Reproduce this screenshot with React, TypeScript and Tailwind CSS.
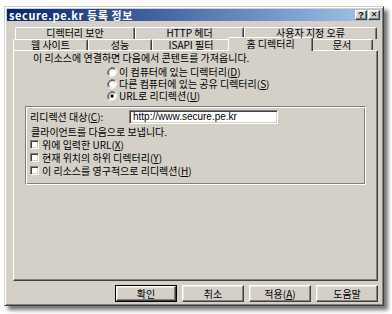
import React from "react";

const F = "font-['Noto_Sans_CJK_KR','Noto_Sans',sans-serif]";

const raised =
  "border border-t-white border-l-white border-r-[#404040] border-b-[#404040] shadow-[inset_-1px_-1px_#808080,inset_1px_1px_#e8e6e1]";

function L({ pre, k, post = ")" }: { pre: string; k: string; post?: string }) {
  return (
    <span className="flex items-center leading-[12px] whitespace-pre">
      <span>{pre}</span>
      <span className="underline underline-offset-[1px]">{k}</span>
      <span>{post}</span>
    </span>
  );
}

function Tab({ w, h, children, sel, up }: { w: number; h: number; children: React.ReactNode; sel?: boolean; up?: boolean }) {
  return (
    <div
      style={{ width: w, height: sel ? h + 3 : h }}
      className={`${sel ? "-mx-[2px] -mt-[2px] -mb-[1px] relative z-10 pb-[1px]" : ""} ${up ? "pb-[2px]" : ""} shrink-0 bg-[#d4d0c8] border-t border-l border-r border-t-white border-l-white border-r-[#404040] rounded-t-[2px] shadow-[inset_-1px_0_#808080] flex items-center justify-center text-[10px] leading-[10px] text-black`}
    >
      <span className="leading-[10px] relative z-20">{children}</span>
    </div>
  );
}

function Radio({ checked }: { checked?: boolean }) {
  return (
    <svg width="10" height="10" viewBox="0 0 12 12" className="shrink-0">
      <path d="M10.2 1.8 A6 6 0 0 0 1.8 10.2" fill="none" stroke="#808080" strokeWidth="1.2" />
      <path d="M1.8 10.2 A6 6 0 0 0 10.2 1.8" fill="none" stroke="#ffffff" strokeWidth="1.2" />
      <circle cx="6" cy="6" r="4.6" fill="#fff" />
      <path d="M9.3 2.7 A4.7 4.7 0 0 0 2.7 9.3" fill="none" stroke="#404040" strokeWidth="1.2" />
      {checked && <circle cx="6" cy="6" r="2" fill="#000" />}
    </svg>
  );
}

function Check() {
  return (
    <div className="w-[9px] h-[9px] shrink-0 bg-white border border-t-[#808080] border-l-[#808080] border-r-white border-b-white shadow-[inset_1px_1px_#404040,inset_-1px_-1px_#d4d0c8]" />
  );
}

function Btn({ children, def }: { children: React.ReactNode; def?: boolean }) {
  return (
    <div
      className={`w-[62px] h-[17px] flex items-center justify-center text-[10px] leading-[12px] bg-[#d4d0c8] ${
        def ? "border border-black" : ""
      }`}
    >
      <div className={`w-full h-full flex items-center justify-center ${raised}`}>{children}</div>
    </div>
  );
}

export default function App() {
  return (
    <div className={`w-[392px] h-[314px] bg-white pt-[6px] pl-[4px] ${F} text-black overflow-hidden`}>
      <div className="w-[380px] h-[300px] bg-[#d4d0c8] border border-t-[#d4d0c8] border-l-[#d4d0c8] border-r-[#404040] border-b-[#404040] shadow-[inset_1px_1px_white,inset_-1px_-1px_#808080,4px_4px_4px_rgba(0,0,0,0.55)] p-[2px] flex flex-col">
        {/* title bar */}
        <div className="h-[12px] bg-gradient-to-r from-[#0a246a] to-[#a6caf0] flex items-center justify-between pl-[2px] pr-[1px]">
          <span className="text-white text-[11px] font-bold leading-[11px] tracking-[0.6px]">secure.pe.kr 등록 정보</span>
          <div className="flex">
            <div className={`w-[12px] h-[10px] bg-[#d4d0c8] ${raised} flex items-center justify-center text-[9px] font-bold leading-none font-['Liberation_Sans',sans-serif]`}>?</div>
            <div className={`w-[12px] h-[10px] ml-[1px] bg-[#d4d0c8] ${raised} flex items-center justify-center text-[8px] font-bold leading-none font-['DejaVu_Sans',sans-serif]`}>✕</div>
          </div>
        </div>

        {/* tabs */}
        <div className="mt-[6px] flex flex-col">
          <div className="flex ml-[8px]">
            <Tab w={120} h={12} up>디렉터리 보안</Tab>
            <Tab w={109} h={12} up>HTTP 헤더</Tab>
            <Tab w={133} h={12} up>사용자 지정 오류</Tab>
          </div>
          <div className="flex ml-[6px] items-end">
            <Tab w={75} h={11}>웹 사이트</Tab>
            <Tab w={64} h={11}>성능</Tab>
            <Tab w={78} h={11}>ISAPI 필터</Tab>
            <Tab w={85} h={11} sel>홈 디렉터리</Tab>
            <Tab w={62} h={11}>문서</Tab>
          </div>
        </div>

        {/* panel */}
        <div className="ml-[6px] w-[365px] h-[231px] shrink-0 border border-t-white border-l-white border-r-[#404040] border-b-[#404040] shadow-[inset_-1px_-1px_#808080] text-[10px] leading-[12px] flex flex-col">
          <div className="mt-[1px] ml-[19px] h-[12px] flex items-center">
            <span>이 리소스에 연결하면 다음에서 콘텐트를 가져옵니다.</span>
          </div>
          <div className="mt-[2px] ml-[93px] flex flex-col">
            <div className="h-[12px] flex items-center gap-[2px]">
              <Radio />
              <L pre="이 컴퓨터에 있는 디렉터리(" k="D" />
            </div>
            <div className="h-[12px] flex items-center gap-[2px]">
              <Radio />
              <L pre="다른 컴퓨터에 있는 공유 디렉터리(" k="S" />
            </div>
            <div className="h-[12px] flex items-center gap-[2px]">
              <Radio checked />
              <L pre="URL로 리디렉션(" k="U" />
            </div>
          </div>
          <div className="mt-[4px] ml-[11px] w-[341px] h-[79px] border border-t-[#808080] border-l-[#808080] border-r-white border-b-white shadow-[inset_1px_1px_white,inset_-1px_-1px_#808080] pl-[4px] pt-[3px] flex flex-col">
            <div className="flex items-center h-[14px]">
              <span className="w-[99px] flex">
                <L pre="리디렉션 대상(" k="C" post="):" />
              </span>
              <div className="w-[149px] h-[14px] bg-white border border-t-[#808080] border-l-[#808080] border-r-white border-b-white shadow-[inset_1px_1px_#404040,inset_-1px_-1px_#d4d0c8] flex items-center pl-[3px] text-[10px] font-['Liberation_Sans',sans-serif]">
                <span>http://www.secure.pe.kr</span>
              </div>
            </div>
            <div className="mt-[2px] h-[12px] flex items-center ml-[1px]">
              <span>클라이언트를 다음으로 보냅니다.</span>
            </div>
            <div className="h-[13px] flex items-center gap-[3px]">
              <Check />
              <L pre="위에 입력한 URL(" k="X" />
            </div>
            <div className="h-[13px] flex items-center gap-[3px]">
              <Check />
              <L pre="현재 위치의 하위 디렉터리(" k="Y" />
            </div>
            <div className="h-[13px] flex items-center gap-[3px]">
              <Check />
              <L pre="이 리소스를 영구적으로 리디렉션(" k="H" />
            </div>
          </div>
        </div>

        {/* buttons */}
        <div className="mt-[4px] flex justify-end gap-[5px] pr-[3px]">
          <Btn def>
            <span>확인</span>
          </Btn>
          <Btn>
            <span>취소</span>
          </Btn>
          <Btn>
            <L pre="적용(" k="A" />
          </Btn>
          <Btn>
            <span>도움말</span>
          </Btn>
        </div>
      </div>
    </div>
  );
}
